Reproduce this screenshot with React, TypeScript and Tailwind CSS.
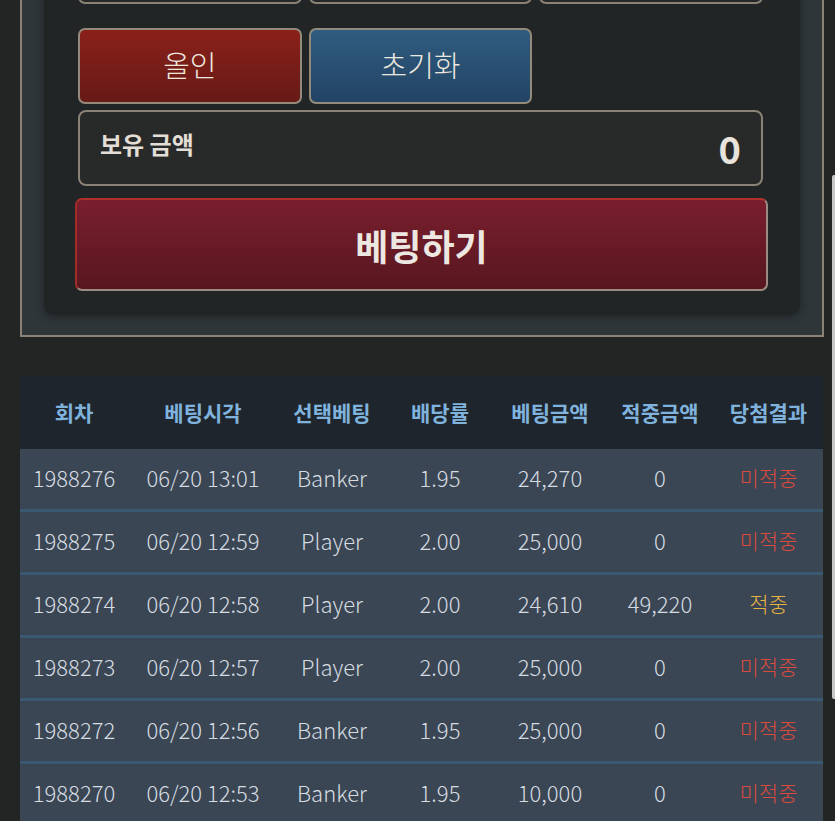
const rows = [
  { id: "1988276", time: "06/20 13:01", pick: "Banker", odds: "1.95", bet: "24,270", win: "0", result: "미적중" },
  { id: "1988275", time: "06/20 12:59", pick: "Player", odds: "2.00", bet: "25,000", win: "0", result: "미적중" },
  { id: "1988274", time: "06/20 12:58", pick: "Player", odds: "2.00", bet: "24,610", win: "49,220", result: "적중" },
  { id: "1988273", time: "06/20 12:57", pick: "Player", odds: "2.00", bet: "25,000", win: "0", result: "미적중" },
  { id: "1988272", time: "06/20 12:56", pick: "Banker", odds: "1.95", bet: "25,000", win: "0", result: "미적중" },
  { id: "1988270", time: "06/20 12:53", pick: "Banker", odds: "1.95", bet: "10,000", win: "0", result: "미적중" },
];

const headers = ["회차", "베팅시각", "선택베팅", "배당률", "베팅금액", "적중금액", "당첨결과"];

const grid = "grid grid-cols-[108px_150px_108px_108px_112px_108px_109px]";

export default function App() {
  return (
    <div className="relative h-[821px] w-[835px] overflow-hidden bg-[#232525] font-['Noto_Sans_CJK_KR','Noto_Sans',sans-serif]">
      <div className="-mt-[100px] ml-[20px] w-[804px] border-2 border-t-0 border-[#8a8275] bg-[#2f3639] px-[22px] pb-[20px]">
        <div className="rounded-b-[10px] bg-[#222526] pb-[24px] pl-[34px] pr-[37px] pt-[28px] shadow-[0_2px_10px_rgba(0,0,0,0.35)]">
          <div className="grid grid-cols-3 gap-x-[7px]">
            <div className="h-[76px] rounded-[7px] border-2 border-[#8a8275] bg-[#262828]" />
            <div className="h-[76px] rounded-[7px] border-2 border-[#8a8275] bg-[#262828]" />
            <div className="h-[76px] rounded-[7px] border-2 border-[#8a8275] bg-[#262828]" />
          </div>
          <div className="mt-[24px] grid grid-cols-3 gap-x-[7px]">
            <div className="flex h-[76px] items-center justify-center rounded-[7px] border-2 border-[#948a7c] bg-gradient-to-b from-[#8a2019] to-[#671a16] pb-[3px] text-[29px] font-light text-[#ece7df]">
              올인
            </div>
            <div className="flex h-[76px] items-center justify-center rounded-[7px] border-2 border-[#948a7c] bg-gradient-to-b from-[#305c80] to-[#224465] pb-[3px] text-[29px] font-light text-[#ece7df]">
              초기화
            </div>
          </div>
          <div className="mt-[6px] flex h-[76px] items-center justify-between rounded-[8px] border-2 border-[#8a8275] bg-[#282a2a] pl-[20px] pr-[20px]">
            <span className="-mt-[8px] text-[24px] font-bold text-[#e3ded6]">보유 금액</span>
            <span className="text-[38px] font-bold leading-none text-[#e8e4dc]">0</span>
          </div>
          <div className="-ml-[3px] -mr-[5px] mt-[12px] flex h-[93px] items-center justify-center rounded-[7px] border-2 border-[#9a8c82] border-l-[#a42c28] border-t-[#b0302a] bg-gradient-to-b from-[#7a1e2e] to-[#57171f] text-[36px] font-bold text-[#ece7e1]">
            베팅하기
          </div>
        </div>
      </div>

      <div className="ml-[20px] mt-[39px] w-[803px]">
        <div className={`${grid} h-[73px] items-center bg-[#1f252c] text-[21px] font-bold text-[#7fb3de]`}>
          {headers.map((h) => (
            <div key={h} className="text-center">
              {h}
            </div>
          ))}
        </div>
        {rows.map((r) => (
          <div
            key={r.id}
            className={`${grid} h-[63px] items-center border-b-[3px] border-[#3a5a72] bg-[#3a4653] pb-[3px] text-[22px] font-light text-[#d6dce2]`}
          >
            <div className="text-center">{r.id}</div>
            <div className="text-center">{r.time}</div>
            <div className="text-center">{r.pick}</div>
            <div className="text-center">{r.odds}</div>
            <div className="text-center">{r.bet}</div>
            <div className="text-center">{r.win}</div>
            <div className={`text-center text-[21px] ${r.result === "적중" ? "text-[#e8b243]" : "text-[#dc4a3e]"}`}>{r.result}</div>
          </div>
        ))}
      </div>

      <div className="absolute left-[832px] top-[175px] h-[524px] w-[3px] rounded-l-[2px] bg-[#c6c6c6]" />
    </div>
  );
}
